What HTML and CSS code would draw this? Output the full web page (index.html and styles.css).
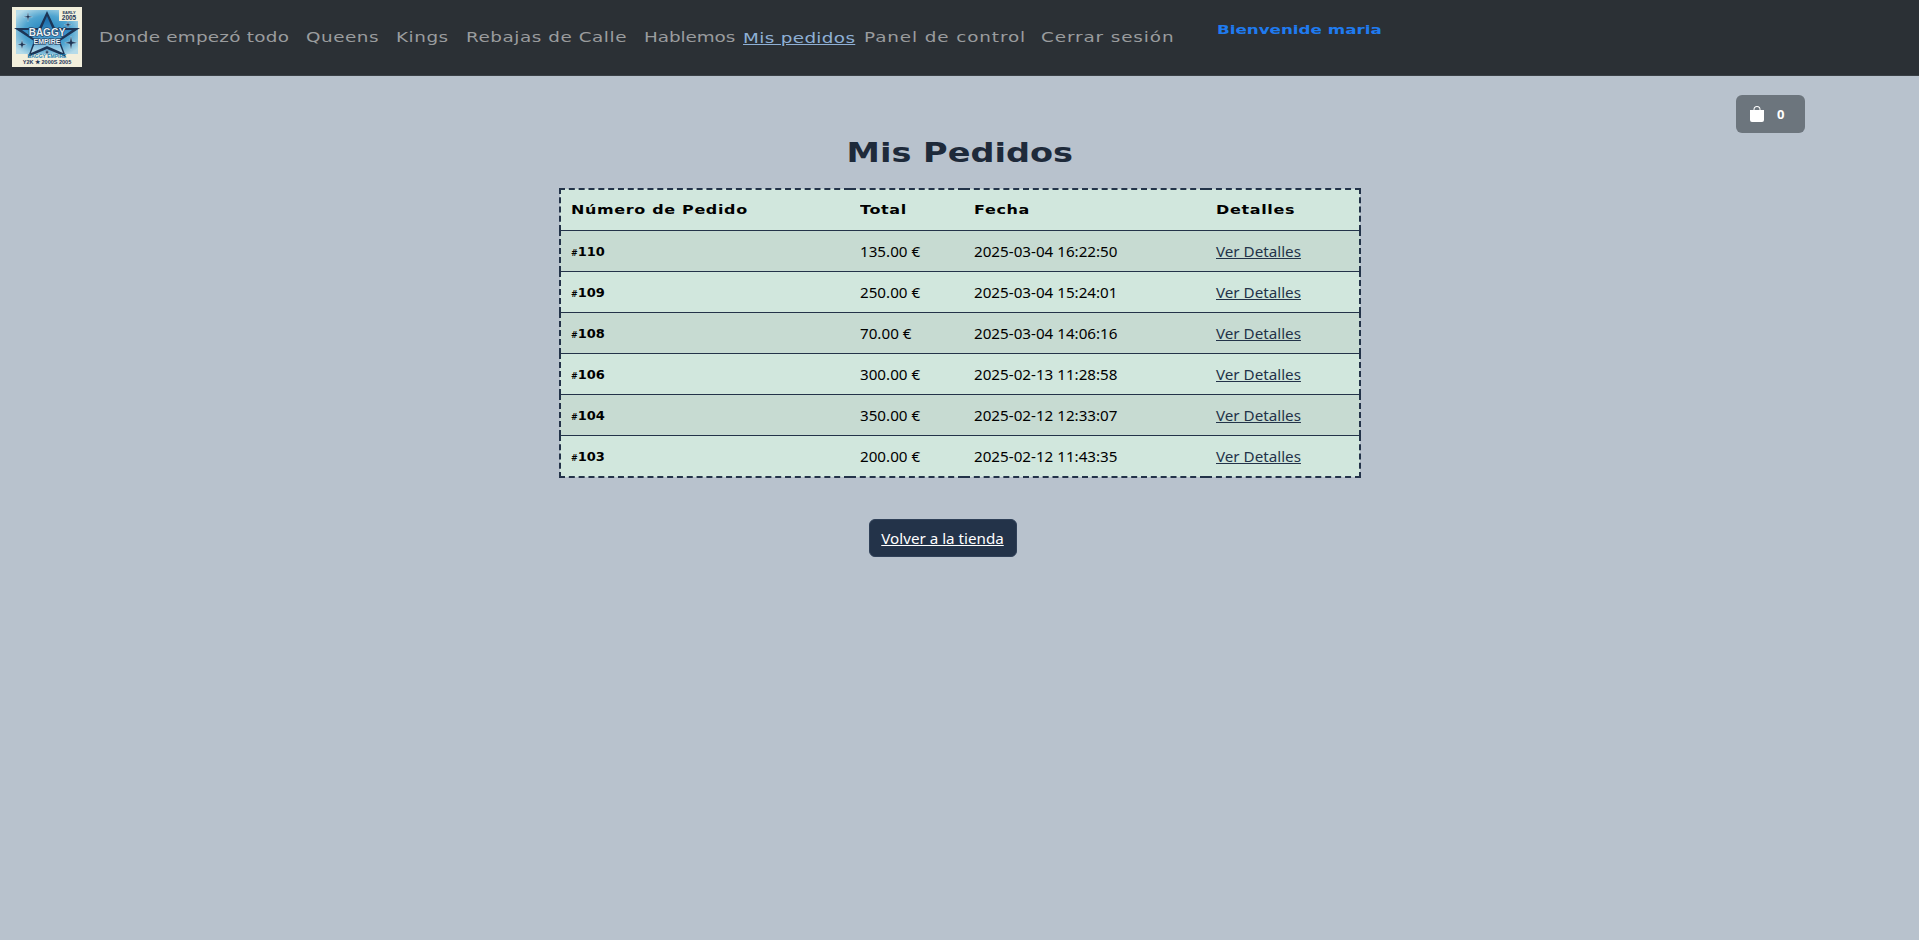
FILE: index.html
```html
<!DOCTYPE html>
<html lang="es">
<head>
<meta charset="utf-8">
<title>Mis Pedidos</title>
<link rel="stylesheet" href="styles.css">
</head>
<body>
<nav class="navbar">
  <a class="brand" href="#">
    <svg class="logo" viewBox="0 0 70 60" width="70" height="60" aria-label="Baggy Empire">
      <defs>
        <radialGradient id="sky" cx="50%" cy="50%" r="62%">
          <stop offset="0" stop-color="#1b7cb8"/>
          <stop offset=".6" stop-color="#4ea3cf"/>
          <stop offset="1" stop-color="#b5dbe9"/>
        </radialGradient>
        <linearGradient id="starfill" x1="0" y1="0" x2="0" y2="1">
          <stop offset="0" stop-color="#1668a8"/>
          <stop offset=".55" stop-color="#3f97cc"/>
          <stop offset="1" stop-color="#b9dfee"/>
        </linearGradient>
      </defs>
      <rect width="70" height="60" fill="#f2efdc"/>
      <rect x="4" y="3" width="62" height="44" fill="url(#sky)"/>
      <rect x="47" y="2" width="20" height="12" fill="#f2efdc"/>
      <text class="lg-t" x="57" y="7">EARLY</text>
      <text class="lg-b" x="57" y="13">2005</text>
      <path class="lg-spark" d="M16 5l.8 4 3.700.8-3.700.8-.8 4-.8-4-3.700-.8 3.700-.8z M56 14l.7 3 3 .7-3 .7-.7 3-.7-3-3-.7 3-.7z M10 33l1 3.500 3.500 1-3.500 1-1 3.500-1-3.500-3.500-1 3.500-1z M59 29l1.200 5.500 5 1.200-5 1.200-1.200 5.500-1.200-5.500-5-1.200 5-1.200z M35 42l.8 2.500 2.200.6-2.200.6-.8 2.500-.8-2.500-2.200-.6 2.200-.6z"/>
      <path d="M35 4l8 17h25L48 34l6 16-19-8-19 8 6-16L2 21h25z" fill="#1c3556"/>
      <path d="M35 9l6 14h19L46 33l5 13-16-7-16 7 5-13L10 23h19z" fill="url(#starfill)"/>
      <text class="lg-w" x="35" y="29">BAGGY</text>
      <text class="lg-e" x="35" y="36.500">EMPIRE</text>
      <text class="lg-c" x="35" y="51">BAGGY EMPIRE</text>
      <text class="lg-n" x="35" y="57">Y2K ★ 2000S 2005</text>
    </svg>
  </a>
  <div class="nav-links">
    <a class="nav-link tight" href="#">Donde empezó todo</a>
    <a class="nav-link" href="#">Queens</a>
    <a class="nav-link" href="#">Kings</a>
    <a class="nav-link" href="#">Rebajas de Calle</a>
    <a class="nav-link tighter" href="#">Hablemos</a>
    <a class="nav-link active" href="#">Mis pedidos</a>
    <a class="nav-link loose" href="#">Panel de control</a>
    <a class="nav-link loose" href="#">Cerrar sesión</a>
    <span class="welcome">Bienvenide maria</span>
  </div>
</nav>
<main class="page">
  <div class="cart-row">
    <a class="cart" href="#">
      <svg width="16" height="16" viewBox="0 0 16 16" fill="#fff" aria-hidden="true"><path d="M8 1a2.500 2.500 0 0 1 2.500 2.500V4h-5v-.5A2.500 2.500 0 0 1 8 1m3.500 3v-.5a3.500 3.500 0 1 0-7 0V4H1v10a2 2 0 0 0 2 2h10a2 2 0 0 0 2-2V4z"/></svg>
      <span class="cart-count">0</span>
    </a>
  </div>
  <h1 class="title">Mis Pedidos</h1>
  <table class="orders">
    <thead>
      <tr><th class="c1"><span class="wide">Número de Pedido</span></th><th class="c2"><span class="wide">Total</span></th><th class="c3"><span class="wide">Fecha</span></th><th class="c4"><span class="wide">Detalles</span></th></tr>
    </thead>
    <tbody>
      <tr><td class="num"><span class="hash">#</span>110</td><td>135.00 €</td><td>2025-03-04 16:22:50</td><td><a href="#">Ver Detalles</a></td></tr>
      <tr><td class="num"><span class="hash">#</span>109</td><td>250.00 €</td><td>2025-03-04 15:24:01</td><td><a href="#">Ver Detalles</a></td></tr>
      <tr><td class="num"><span class="hash">#</span>108</td><td>70.00 €</td><td>2025-03-04 14:06:16</td><td><a href="#">Ver Detalles</a></td></tr>
      <tr><td class="num"><span class="hash">#</span>106</td><td>300.00 €</td><td>2025-02-13 11:28:58</td><td><a href="#">Ver Detalles</a></td></tr>
      <tr><td class="num"><span class="hash">#</span>104</td><td>350.00 €</td><td>2025-02-12 12:33:07</td><td><a href="#">Ver Detalles</a></td></tr>
      <tr><td class="num"><span class="hash">#</span>103</td><td>200.00 €</td><td>2025-02-12 11:43:35</td><td><a href="#">Ver Detalles</a></td></tr>
    </tbody>
  </table>
  <div class="back-row">
    <a class="back" href="#">Volver a la tienda</a>
  </div>
</main>
</body>
</html>
```
FILE: styles.css
```css
* { box-sizing: border-box; }
html, body { height: 100%; }
body {
  margin: 0;
  background: #b8c2cd;
  color: #000;
  font-family: "Noto Sans", "Open Sans", sans-serif;
  font-size: 15.200px;
  overflow: hidden;
}
.navbar {
  display: flex;
  align-items: flex-start;
  height: 76px;
  padding: 7px 0 0 12px;
  background: #2b3035;
  border-bottom: 1px solid #3a4046;
}
.brand { display: block; height: 60px; }
.logo { display: block; }
.lg-t, .lg-b, .lg-w, .lg-e, .lg-c, .lg-n {
  font-family: "Liberation Sans", sans-serif;
  font-weight: 700;
  text-anchor: middle;
}
.lg-t { font-size: 4px; fill: #1c3556; }
.lg-b { font-size: 6.500px; fill: #1c3556; }
.lg-w { font-size: 10px; fill: #e8f2f7; stroke: #1c3556; stroke-width: 1.200px; paint-order: stroke; }
.lg-e { font-size: 7px; fill: #e8f2f7; stroke: #1c3556; stroke-width: 1.200px; paint-order: stroke; }
.lg-c { font-size: 5px; fill: #1a7fb5; }
.lg-n { font-size: 5.500px; fill: #1c3556; }
.lg-spark { fill: #1c3556; stroke: #dcecf3; stroke-width: .3px; }
.nav-links {
  display: grid;
  grid-template-columns: 152.2px 66.2px 51.500px 130.900px 72.800px 89px 130.100px 129.400px auto;
  align-items: center;
  height: 60px;
  margin-left: 17px;
  transform: scaleX(1.36);
  transform-origin: left center;
}
.nav-link {
  font-family: "DejaVu Sans", sans-serif;
  font-size: 13.500px;
  letter-spacing: .4px;
  line-height: 20px;
  color: #9a9c9e;
  text-decoration: none;
  white-space: nowrap;
}
.nav-link.tight { letter-spacing: .18px; }
.nav-link.tighter { letter-spacing: -.06px; }
.nav-link.loose { letter-spacing: .65px; }
.nav-link.active {
  color: #8fb0d6;
  letter-spacing: .25px;
  text-decoration: underline;
  margin-top: 2px;
}
.welcome {
  align-self: start;
  font-family: "DejaVu Sans", sans-serif;
  font-weight: 700;
  font-size: 12.300px;
  line-height: 20px;
  color: #1f7bf0;
  margin-top: 13px;
  white-space: nowrap;
}
.page {
  display: flex;
  flex-direction: column;
  align-items: center;
}
.cart-row {
  align-self: stretch;
  display: flex;
  justify-content: flex-end;
  padding: 19px 114px 0 0;
  height: 57px;
}
.cart {
  display: flex;
  align-items: center;
  width: 69px;
  height: 38px;
  padding-left: 13px;
  background: #6c757d;
  border-radius: 6px;
  text-decoration: none;
}
.cart-count {
  margin-left: 12px;
  color: #fff;
  font-family: "Noto Sans", sans-serif;
  font-weight: 700;
  font-size: 13px;
}
.title {
  margin: 1px 0 0;
  font-family: "DejaVu Sans", sans-serif;
  font-weight: 700;
  font-size: 26px;
  line-height: 38px;
  color: #1e2a3a;
  transform: scaleX(1.29);
}
.orders {
  width: 800px;
  margin: 16px 0 0 1px;
  border-collapse: collapse;
  border: 2px dashed #233349;
  table-layout: fixed;
}
.orders th, .orders td {
  height: 41px;
  padding: 0 10px;
  text-align: left;
  vertical-align: middle;
  border-bottom: 1px solid #233349;
}
.orders tr:last-child td { border-bottom: 0; height: 42px; }
.orders th {
  background: #d1e7dd;
  font-family: "DejaVu Sans", sans-serif;
  font-weight: 700;
  font-size: 12px;
  letter-spacing: .5px;
}
.wide {
  display: inline-block;
  transform: scaleX(1.33);
  transform-origin: left center;
  white-space: nowrap;
}
.orders tbody tr:nth-child(odd) td { background: #c7dbd2; }
.orders tbody tr:nth-child(even) td { background: #d1e7dd; }
.c1 { width: 290px; }
.c2 { width: 114px; }
.c3 { width: 242px; }
.c4 { width: 154px; }
.orders td.num {
  font-family: "DejaVu Sans", sans-serif;
  font-weight: 700;
  font-size: 13px;
  padding-top: 2px;
}
.hash { font-size: 8px; }
.orders a { color: #233349; }
.back-row {
  width: 800px;
  padding-left: 309px;
  margin-top: 41px;
}
.back {
  display: inline-block;
  width: 148px;
  height: 38px;
  line-height: 36px;
  text-align: center;
  background: #233349;
  border: 1px solid #2f4058;
  border-radius: 6px;
  color: #fff;
}
```
